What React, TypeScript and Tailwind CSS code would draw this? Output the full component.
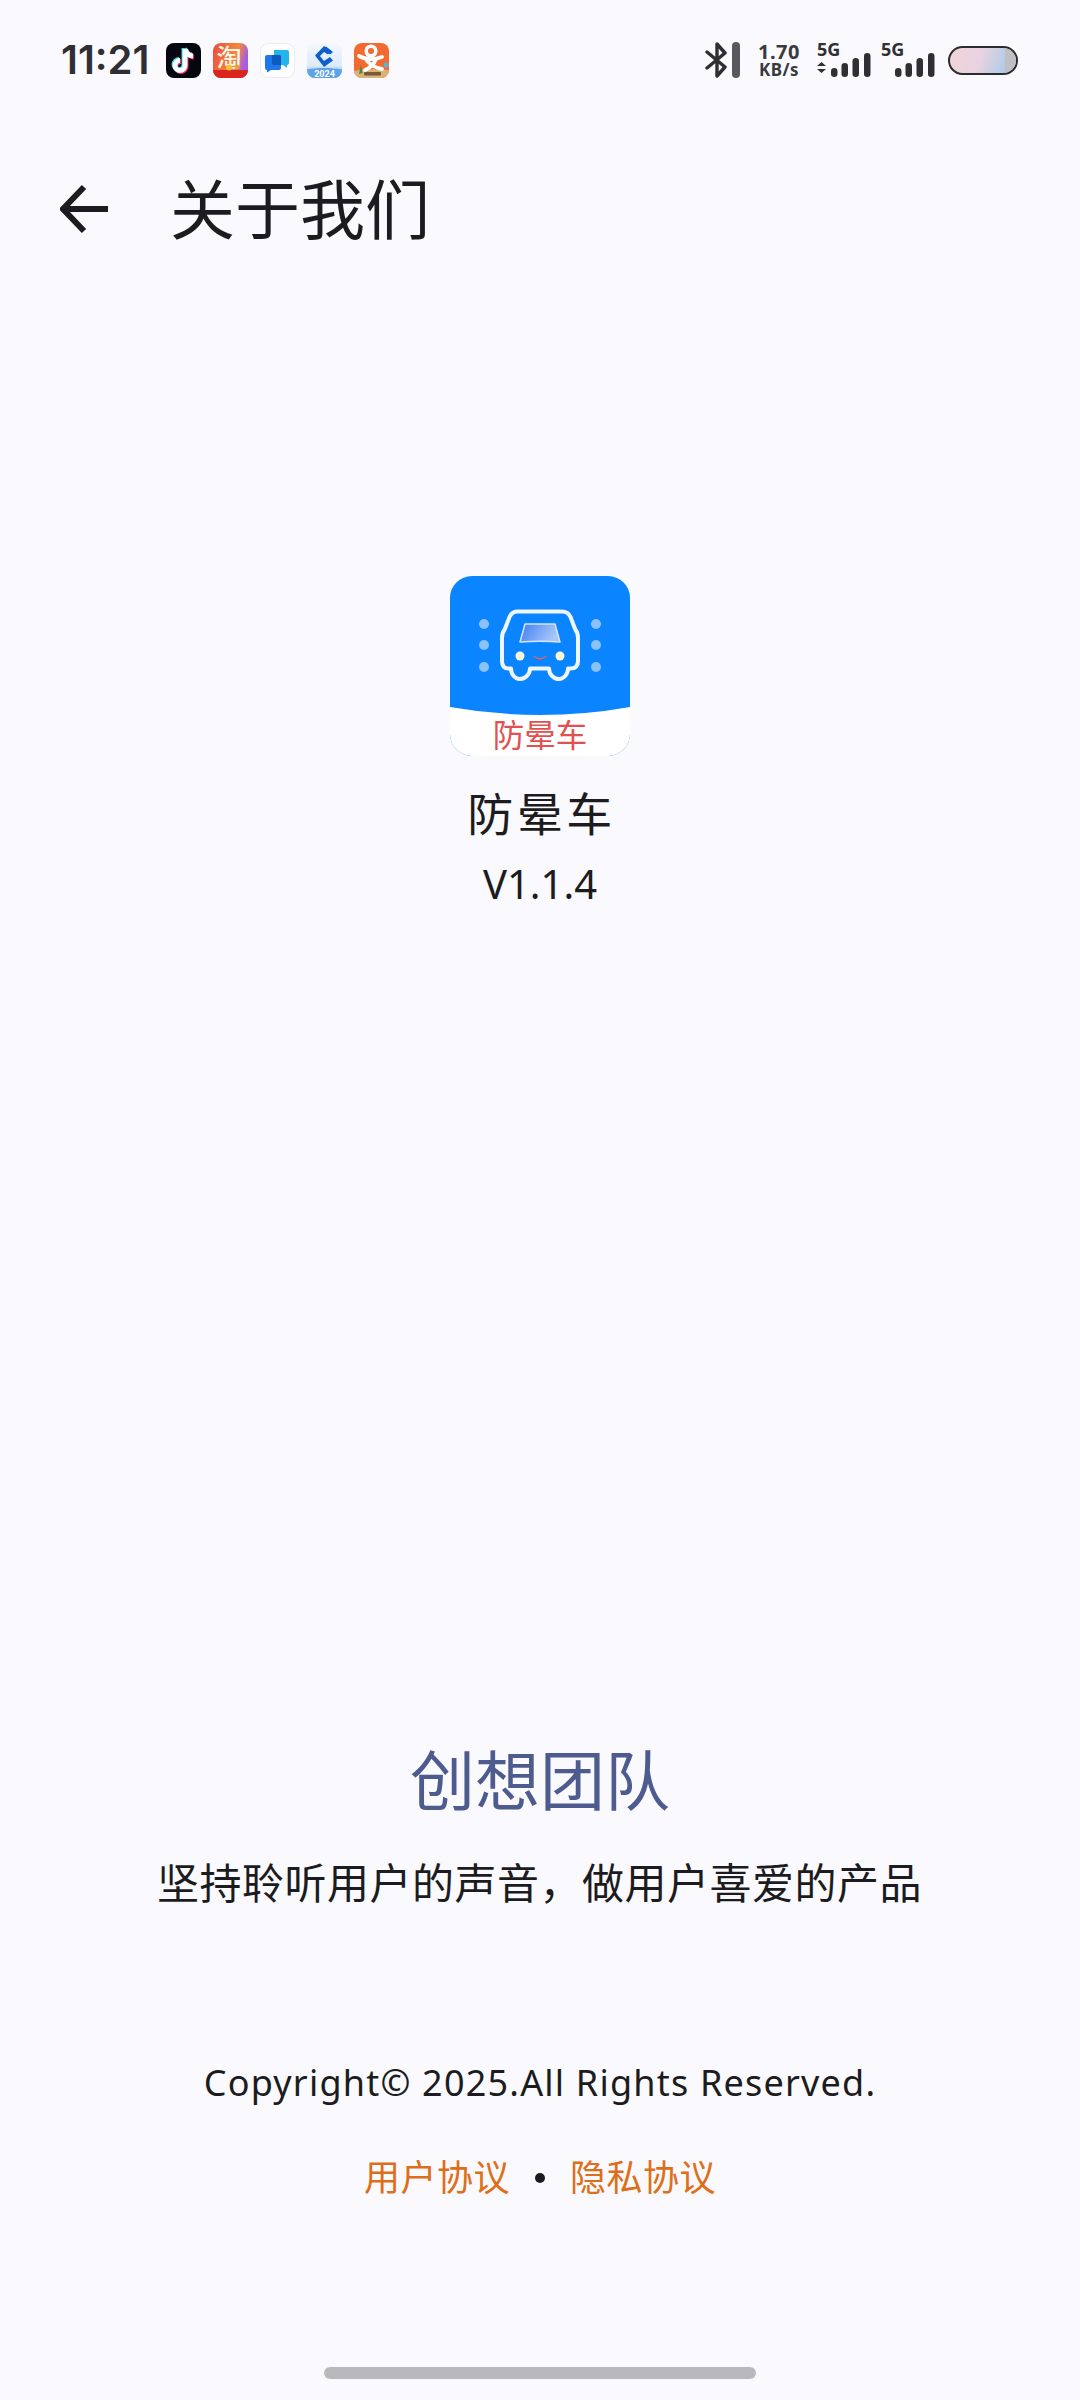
import React from "react";

const FONT = { fontFamily: '"Noto Sans", "Noto Sans CJK SC", sans-serif' };
const CJK = '"Noto Sans CJK SC", sans-serif';

function AppIcons() {
  return (
    <div className="flex items-center gap-[12px]">
      <svg width="35" height="35" viewBox="0 0 35 35">
        <rect width="35" height="35" rx="8" fill="#05060f" />
        <g fill="none" strokeWidth="5">
          <path d="M19 6v16.500a5 5 0 1 1-5-5" stroke="#25d8e4" transform="translate(-1 -1)" />
          <path d="M19.500 6c.5 4 3.300 6.800 7.500 7" stroke="#25d8e4" transform="translate(-1 -1)" />
          <path d="M19 6v16.500a5 5 0 1 1-5-5" stroke="#f2295b" transform="translate(1 1)" />
          <path d="M19.500 6c.5 4 3.300 6.800 7.500 7" stroke="#f2295b" transform="translate(1 1)" />
          <path d="M19 6v16.500a5 5 0 1 1-5-5" stroke="#fff" />
          <path d="M19.500 6c.5 4 3.300 6.800 7.500 7" stroke="#fff" />
        </g>
      </svg>
      <svg width="35" height="35" viewBox="0 0 35 35" className="overflow-visible">
        <defs>
          <linearGradient id="tb" x1="0" y1="0" x2="1" y2="0.3">
            <stop offset="0" stopColor="#ee4a3c" />
            <stop offset="0.7" stopColor="#f38a3c" />
            <stop offset="1" stopColor="#a45ce4" />
          </linearGradient>
        </defs>
        <rect width="35" height="35" rx="8" fill="url(#tb)" />
        <path d="M0 27h35a8 8 0 0 1-8 8H8a8 8 0 0 1-8-8z" fill="#d9251d" />
        <text x="16" y="24" textAnchor="middle" fontSize="25" fontWeight="500" fill="#fff6e4" fontFamily={CJK}>淘</text>
        <circle cx="16" cy="24.500" r="3" fill="#f4c13e" />
        <circle cx="24" cy="24" r="2.500" fill="#e9a23a" />
      </svg>
      <svg width="35" height="35" viewBox="0 0 35 35">
        <rect x="0.500" y="0.500" width="34" height="34" rx="8" fill="#fff" stroke="#e9ebf3" />
        <path d="M14 7h13a2 2 0 0 1 2 2v11a2 2 0 0 1-2 2v3l-4-3h-2l-7-10z" fill="#25b4ea" />
        <path d="M7 12h12a2 2 0 0 1 2 2v11a2 2 0 0 1-2 2H11l-4 2.500V27a2 2 0 0 1-2-2V14a2 2 0 0 1 2-2z" fill="#1d78ea" />
        <path d="M12 12h7a2 2 0 0 1 2 2v8h-7a2 2 0 0 1-2-2z" fill="#0f58bd" />
      </svg>
      <svg width="35" height="35" viewBox="0 0 35 35">
        <defs>
          <linearGradient id="ccb" x1="0" y1="0" x2="0" y2="1">
            <stop offset="0" stopColor="#f3f8fe" />
            <stop offset="0.65" stopColor="#dcebfa" />
            <stop offset="1" stopColor="#4e97e4" />
          </linearGradient>
        </defs>
        <rect width="35" height="35" rx="8" fill="url(#ccb)" />
        <path d="M24 7.500L17 3 8 12.500 17 24 26 17.500 23 14 17 18 13 13 17 9 21 11.500z" fill="#0d5fd0" />
        <path d="M19 3.500L26 9 23 11.500 16.500 6z" fill="#0d5fd0" />
        <path d="M0 26.500c10-2 24-2 35 0v.500a8 8 0 0 1-8 8H8a8 8 0 0 1-8-8z" fill="#5da3ea" />
        <text x="17.500" y="33.500" textAnchor="middle" fontSize="9" fontWeight="700" fill="#fff" fontFamily="Roboto, sans-serif">2024</text>
      </svg>
      <svg width="35" height="35" viewBox="0 0 35 35">
        <rect width="35" height="35" rx="8" fill="#f26a30" />
        <path d="M0 28c8-2 24-2 35-1a8 8 0 0 1-8 8H8a8 8 0 0 1-8-7z" fill="#d9b27a" />
        <circle cx="17" cy="8" r="4.800" fill="none" stroke="#fff" strokeWidth="3.500" />
        <path d="M5 13c7 4 15 4 23 1" fill="none" stroke="#fff" strokeWidth="3.800" strokeLinecap="round" />
        <path d="M22 16c-2 5-6 9-11 11M13 18c3 3 8 7 15 8" fill="none" stroke="#fff" strokeWidth="3.800" strokeLinecap="round" />
        <circle cx="32" cy="22" r="2.500" fill="#5fb0d8" />
        <path d="M5 31l2-9 1.500 8z" fill="#3f8a45" />
        <rect x="10" y="29" width="17" height="3.500" rx="1" fill="#5b3a20" opacity="0.75" />
      </svg>
    </div>
  );
}

function Signal({ arrows }: { arrows?: boolean }) {
  return (
    <div className="flex flex-col w-[56px] h-[34px]">
      <span className="h-[10px] text-[18px] leading-[13px] font-bold text-[#2f2f33]">5G</span>
      <svg width="56" height="24" viewBox="0 0 56 24">
        {arrows && <path d="M0 13l4.500-4 4.500 4zM0 16h9l-4.500 4z" fill="#2f2f33" />}
        <rect x="14" y="15" width="6.500" height="9" rx="3.200" fill="#2f2f33" />
        <rect x="24.500" y="10" width="6.500" height="14" rx="3.200" fill="#2f2f33" />
        <rect x="35.500" y="5" width="6.500" height="19" rx="3.200" fill="#2f2f33" />
        <rect x="47" y="0" width="6.500" height="24" rx="3.200" fill="#2f2f33" />
      </svg>
    </div>
  );
}

function StatusRight() {
  return (
    <div className="flex items-center">
      <svg width="36" height="36" viewBox="0 0 36 36" fill="none" className="mr-[16px]">
        <path d="M2 10L20 25L12 34V2L20 11L2 26" stroke="#2f2f33" strokeWidth="3.400" strokeLinejoin="round" strokeLinecap="round" />
        <rect x="27" y="0" width="8" height="36" rx="4" fill="#58585c" />
      </svg>
      <div className="flex flex-col items-center w-[44px] mr-[16px] text-[#3a3a3e] font-bold">
        <span className="h-[19px] text-[20px] leading-[17px] tracking-[0.5px]">1.70</span>
        <span className="h-[15px] text-[17px] leading-[15px] tracking-[0.5px] whitespace-nowrap">KB/s</span>
      </div>
      <div className="flex items-center gap-[8px] mr-[11px]">
        <Signal arrows />
        <Signal />
      </div>
      <div className="w-[70px] h-[29px] rounded-[15px] border-[2px] border-[#2c2c30] overflow-hidden flex bg-[linear-gradient(110deg,#f2d4d8_0%,#e8d3e0_45%,#a9cbe8_88%)]">
        <div className="ml-auto w-[11px] h-full bg-[#c0c0c4]" />
      </div>
    </div>
  );
}

function Logo() {
  return (
    <svg width="180" height="180" viewBox="0 0 180 180" className="block">
      <defs>
        <clipPath id="logoclip"><rect width="180" height="180" rx="22" /></clipPath>
        <linearGradient id="wind" x1="0" y1="0" x2="1" y2="0.3">
          <stop offset="0" stopColor="#3f7df0" />
          <stop offset="1" stopColor="#a9c8fb" />
        </linearGradient>
      </defs>
      <g clipPath="url(#logoclip)">
        <rect width="180" height="180" fill="#0a84ff" />
        <path d="M0 131Q90 147 180 131V180H0z" fill="#fff" />
      </g>
      {[34, 146].map((x) =>
        [48, 69, 91].map((y) => <circle key={`${x}-${y}`} cx={x} cy={y} r="5" fill="#8cc1ff" />)
      )}
      <path
        d="M68 35.500h44c4.500 0 7 2 8.500 5.500l5 13c2 2 2.500 5 2.500 8V85c0 5-2.500 7.500-7.500 7.500h-2.500c0 6-4.500 10.500-9 10.500s-10-4-10-10.500H80c0 6-5 10.500-10 10.500s-9-4.500-9-10.500h-2.500C54 92.500 52 90 52 85V62c0-3 .5-6 2.500-8l5-13C61 37.500 63.500 35.500 68 35.500z"
        fill="none"
        stroke="#eef6ff"
        strokeWidth="4"
        strokeLinejoin="round"
      />
      <path d="M75 48h30l5 18c-13-1-27-1-40 0z" fill="url(#wind)" stroke="#d5e4fd" strokeWidth="1.500" strokeLinejoin="round" />
      <circle cx="70" cy="80" r="4.500" fill="#fdf7d8" />
      <circle cx="110" cy="80" r="4.500" fill="#fdf7d8" />
      <path d="M84 80.500c3 3 9 3 12 0" fill="none" stroke="#e0605f" strokeWidth="1.300" strokeLinecap="round" />
      <text x="90" y="171" textAnchor="middle" fontSize="31.500" fill="#e0524f" fontFamily={CJK}>防晕车</text>
    </svg>
  );
}

export default function App() {
  return (
    <div style={FONT} className="w-[1080px] h-[2400px] bg-[#f9f9fe] flex flex-col items-stretch text-[#1c1c20] overflow-hidden">
      <div className="h-[35px] shrink-0" />
      <div className="h-[50px] shrink-0 flex items-center justify-between pl-[61px] pr-[62px]">
        <div className="flex items-center gap-[17px]">
          <span className="text-[40px] leading-[50px] font-semibold text-[#2f2f33] font-['Inter'] whitespace-nowrap">11:21</span>
          <AppIcons />
        </div>
        <StatusRight />
      </div>

      <div className="mt-[84px] h-[80px] shrink-0 flex items-center pl-[60px]">
        <svg width="50" height="50" viewBox="0 0 50 50" fill="none" className="mr-[60px]">
          <path d="M24 3L3 25l21 22" stroke="#1c1c20" strokeWidth="6" />
          <path d="M4 25h44" stroke="#1c1c20" strokeWidth="6" />
        </svg>
        <span className="text-[65px] leading-[80px]">关于我们</span>
      </div>

      <div className="mt-[327px] flex flex-col items-center shrink-0">
        <Logo />
        <span className="mt-[27px] pl-[3px] text-[46px] leading-[60px] tracking-[3.5px]">防晕车</span>
        <span className="mt-[11px] text-[40px] leading-[60px]">V1.1.4</span>
      </div>

      <div className="flex-1" />

      <div className="flex flex-col items-center shrink-0">
        <span className="text-[65px] leading-[80px] text-[#4d5b8e] -translate-y-[1px]">创想团队</span>
        <span className="mt-[32px] text-[42px] leading-[60px] tracking-[0.5px] pr-[1px]">坚持聆听用户的声音，做用户喜爱的产品</span>
        <span className="mt-[140px] text-[36px] leading-[60px] tracking-[1.2px]">Copyright© 2025.All Rights Reserved.</span>
        <div className="mt-[35px] flex items-center h-[60px] text-[36px] tracking-[0.5px] text-[#de6f1a]">
          <span>用户协议</span>
          <span className="w-[10px] h-[10px] rounded-full bg-[#1c1c20] mx-[25px]" />
          <span>隐私协议</span>
        </div>
      </div>

      <div className="mt-[159px] mb-[21px] shrink-0 self-center w-[432px] h-[12px] rounded-full bg-[#b9b9bd]" />
    </div>
  );
}
